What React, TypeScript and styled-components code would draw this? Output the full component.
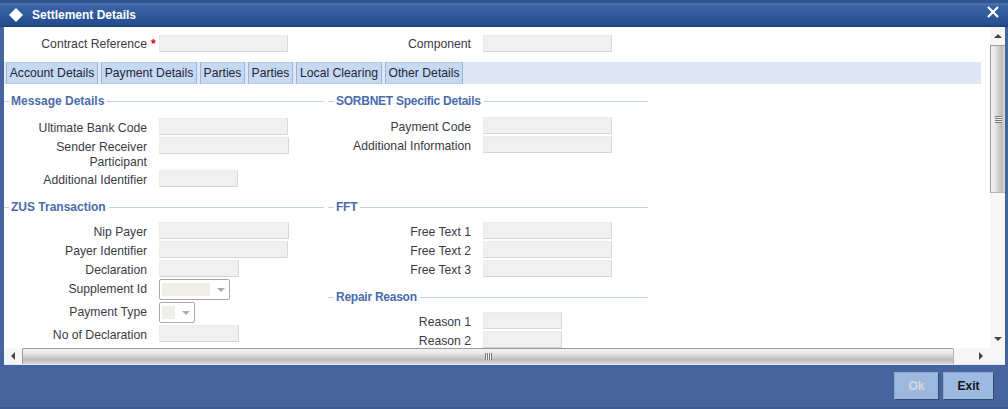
import styled, { createGlobalStyle } from "styled-components";

const GlobalStyle = createGlobalStyle`
  html, body {
    margin: 0;
    padding: 0;
    background: #46659e;
  }
  body {
    font-family: "Liberation Sans", Arial, sans-serif;
    font-size: 12px;
  }
`;

const Frame = styled.div`
  width: 1008px;
  height: 409px;
  display: flex;
  flex-direction: column;
  overflow: hidden;
  background: #46659e;
`;

const TitleBar = styled.header`
  height: 27px;
  box-sizing: border-box;
  flex: none;
  display: flex;
  align-items: center;
  padding: 3px 9px 0 8px;
  gap: 8px;
  color: #fff;
  background: linear-gradient(#2f568f 0, #2f568f 3px, #5d82b8 4px, #3a64a6 5px, #2f5a9c 15px, #234c8d 25px, #173a73 27px);
`;

const Title = styled.h1`
  margin: 0;
  flex: 1;
  font-size: 12px;
  font-weight: bold;
`;

const CloseSlot = styled.span`
  display: flex;
  margin-bottom: 7px;
`;

const Workspace = styled.main`
  flex: none;
  height: 338px;
  margin: 0 3px 0 4px;
  display: flex;
  flex-direction: column;
  background: #fff;
`;

const BodyRow = styled.div`
  flex: 1;
  min-height: 0;
  display: flex;
`;

const Content = styled.div`
  flex: 1;
  min-width: 0;
  overflow: hidden;
  padding-top: 8px;
`;

const TopRow = styled.div`
  display: grid;
  grid-template-columns: 320px 320px;
  column-gap: 4px;
`;

const Field = styled.div<{ $h?: number }>`
  display: grid;
  grid-template-columns: 143px auto;
  column-gap: 12px;
  align-items: start;
  height: ${(p) => p.$h ?? 17}px;
`;

const Label = styled.label<{ $top?: number }>`
  position: relative;
  text-align: right;
  color: #3a3a46;
  font-size: 12.2px;
  line-height: 15px;
  padding-top: ${(p) => p.$top ?? 3}px;
`;

const Required = styled.span`
  position: absolute;
  left: 100%;
  margin-left: 4px;
  color: #e00000;
  font-size: 12px;
  font-weight: bold;
`;

const Input = styled.div<{ $w: number }>`
  width: ${(p) => p.$w}px;
  height: 17px;
  box-sizing: border-box;
  background: #f0f0f0;
  border: 1px solid #ececec;
  border-right-color: #d8d8d8;
  border-bottom-color: #d4d4d4;
`;

const SelectBox = styled.div<{ $w: number; $inner: number }>`
  width: ${(p) => p.$w}px;
  height: 21px;
  box-sizing: border-box;
  border: 1px solid #a8a8a8;
  border-radius: 2px;
  padding: 3px 2px;
  display: flex;
  align-items: center;
  justify-content: space-between;
  background: #fff;

  &::before {
    content: "";
    width: ${(p) => p.$inner}px;
    height: 13px;
    background: #efeee9;
  }
`;

const Caret = styled.span`
  width: 0;
  height: 0;
  margin-right: 2px;
  border-left: 4px solid transparent;
  border-right: 4px solid transparent;
  border-top: 4px solid #a9a9a9;
`;

const TabBar = styled.nav`
  height: 22px;
  margin: 10px 9px 10px 0;
  padding-left: 2px;
  display: flex;
  gap: 3px;
  background: #dfe6f4;
`;

const Tab = styled.div<{ $w: number }>`
  width: ${(p) => p.$w}px;
  box-sizing: border-box;
  display: flex;
  align-items: center;
  justify-content: center;
  color: #1f2533;
  font-size: 12.2px;
  white-space: nowrap;
  background: #c6d9f3;
  border: 1px solid #9db5da;
  border-top-color: #b5c9e6;
  border-bottom-color: #b5c9e6;
`;

const Columns = styled.div`
  display: grid;
  grid-template-columns: 320px 320px;
  column-gap: 4px;
  align-items: start;
`;

const Section = styled.section<{ $top?: number }>`
  margin-top: ${(p) => p.$top ?? 0}px;
`;

const Legend = styled.div<{ $lead: number; $after: number; $tight?: boolean }>`
  display: flex;
  align-items: center;
  height: 14px;
  gap: 2px;
  margin-bottom: ${(p) => p.$after}px;
  color: #4a6cab;
  font-size: 12px;
  font-weight: bold;
  letter-spacing: ${(p) => (p.$tight ? "-0.25px" : "0")};
  white-space: nowrap;

  &::before,
  &::after {
    content: "";
    height: 1px;
    background: #c5d2ea;
  }
  &::before {
    flex: none;
    width: ${(p) => p.$lead}px;
  }
  &::after {
    flex: 1;
    margin-left: 1px;
  }
`;

const FieldStack = styled.div`
  display: flex;
  flex-direction: column;
  gap: 2px;
`;

const HScroll = styled.div`
  flex: none;
  height: 16px;
  display: flex;
  background: #f6f6f6;
  border-bottom: 1px solid #e4e8f0;
`;

const ArrowCell = styled.div<{ $w: number; $h: number }>`
  flex: none;
  width: ${(p) => p.$w}px;
  height: ${(p) => p.$h}px;
  display: flex;
  align-items: center;
  justify-content: center;
`;

const Arrow = styled.span<{ $dir: "up" | "down" | "left" | "right" }>`
  width: 0;
  height: 0;
  border: 3px solid transparent;
  ${(p) =>
    p.$dir === "up"
      ? "border-bottom: 4px solid #444; border-top-width: 0; border-left-width: 4px; border-right-width: 4px;"
      : p.$dir === "down"
        ? "border-top: 4px solid #444; border-bottom-width: 0; border-left-width: 4px; border-right-width: 4px;"
        : p.$dir === "left"
          ? "border-right: 4px solid #444; border-left-width: 0; border-top-width: 4px; border-bottom-width: 4px;"
          : "border-left: 4px solid #444; border-right-width: 0; border-top-width: 4px; border-bottom-width: 4px;"}
`;

const HThumb = styled.div`
  flex: none;
  width: 932px;
  box-sizing: border-box;
  display: flex;
  align-items: center;
  justify-content: center;
  border: 1px solid #9a9a9a;
  border-right-color: #b5b5b5;
  border-bottom: none;
  border-radius: 2px 2px 0 0;
  background: linear-gradient(#f2f2f2, #e6e6e6 30%, #bdbdbd 70%, #d8d8d8);
`;

const Track = styled.div`
  flex: 1;
`;

const HGrip = styled.span`
  width: 7px;
  height: 7px;
  background: repeating-linear-gradient(90deg, #777 0 1px, #eee 1px 2px);
`;

const VScroll = styled.aside`
  flex: none;
  width: 15px;
  display: flex;
  flex-direction: column;
  background: #f6f6f6;
`;

const VThumb = styled.div`
  flex: none;
  height: 148px;
  box-sizing: border-box;
  display: flex;
  align-items: center;
  justify-content: center;
  border: 1px solid #9a9a9a;
  border-right: none;
  border-bottom-color: #b5b5b5;
  background: linear-gradient(90deg, #f2f2f2, #e6e6e6 30%, #bdbdbd 75%, #d8d8d8);
`;

const VGrip = styled.span`
  width: 7px;
  height: 7px;
  background: repeating-linear-gradient(0deg, #777 0 1px, #eee 1px 2px);
`;

const Corner = styled.div`
  flex: none;
  width: 15px;
`;

const Footer = styled.footer`
  flex: 1;
  display: flex;
  justify-content: flex-end;
  align-items: flex-start;
  gap: 4px;
  padding: 7px 14px 0 0;
  background: #46659e;
  border-bottom: 2px solid #3d5a92;
`;

const Button = styled.button<{ $w: number }>`
  width: ${(p) => p.$w}px;
  height: 28px;
  padding: 0;
  font-family: inherit;
  font-size: 12px;
  font-weight: bold;
  color: #141414;
  background: #9dbae2;
  border: 1px solid #8aa6cf;
  border-right-color: #34496f;
  border-bottom-color: #34496f;

  &:disabled {
    color: #d6dae0;
    background: #9db8dd;
  }
`;

const DiamondIcon = () => (
  <svg width="16" height="16" viewBox="0 0 16 16" aria-hidden="true">
    <path d="M8 1 L15 8 L8 15 L1 8 Z" fill="#fff" />
  </svg>
);

const CloseIcon = () => (
  <svg width="12" height="12" viewBox="0 0 12 12" aria-hidden="true">
    <path d="M1 1 L11 11 M11 1 L1 11" stroke="#fff" strokeWidth="2.2" />
  </svg>
);

const tabs = [
  { label: "Account Details", w: 92 },
  { label: "Payment Details", w: 96 },
  { label: "Parties", w: 45 },
  { label: "Parties", w: 45 },
  { label: "Local Clearing", w: 86 },
  { label: "Other Details", w: 78 },
];

const App = () => {
  return (
    <Frame>
      <GlobalStyle />
      <TitleBar>
        <DiamondIcon />
        <Title>Settlement Details</Title>
        <CloseSlot>
          <CloseIcon />
        </CloseSlot>
      </TitleBar>

      <Workspace>
        <BodyRow>
          <Content>
            <TopRow>
              <Field>
                <Label $top={2}>
                  Contract Reference
                  <Required>*</Required>
                </Label>
                <Input $w={129} />
              </Field>
              <Field>
                <Label $top={2}>Component</Label>
                <Input $w={129} />
              </Field>
            </TopRow>

            <TabBar>
              {tabs.map((tab, i) => (
                <Tab key={i} $w={tab.w}>
                  {tab.label}
                </Tab>
              ))}
            </TabBar>

            <Columns>
              <Section>
                <Legend $lead={5} $after={10}>
                  Message Details
                </Legend>
                <FieldStack>
                  <Field>
                    <Label>Ultimate Bank Code</Label>
                    <Input $w={129} />
                  </Field>
                  <Field $h={31}>
                    <Label>
                      Sender Receiver
                      <br />
                      Participant
                    </Label>
                    <Input $w={130} />
                  </Field>
                  <Field>
                    <Label>Additional Identifier</Label>
                    <Input $w={79} />
                  </Field>
                </FieldStack>
              </Section>
              <Section>
                <Legend $lead={6} $after={9} $tight>
                  SORBNET Specific Details
                </Legend>
                <FieldStack>
                  <Field>
                    <Label>Payment Code</Label>
                    <Input $w={129} />
                  </Field>
                  <Field>
                    <Label>Additional Information</Label>
                    <Input $w={129} />
                  </Field>
                </FieldStack>
              </Section>

              <Section $top={13}>
                <Legend $lead={5} $after={8}>
                  ZUS Transaction
                </Legend>
                <FieldStack>
                  <Field>
                    <Label>Nip Payer</Label>
                    <Input $w={130} />
                  </Field>
                  <Field>
                    <Label>Payer Identifier</Label>
                    <Input $w={129} />
                  </Field>
                  <Field>
                    <Label>Declaration</Label>
                    <Input $w={80} />
                  </Field>
                  <Field $h={21}>
                    <Label>Supplement Id</Label>
                    <SelectBox $w={71} $inner={48}>
                      <Caret />
                    </SelectBox>
                  </Field>
                  <Field $h={21}>
                    <Label>Payment Type</Label>
                    <SelectBox $w={36} $inner={13}>
                      <Caret />
                    </SelectBox>
                  </Field>
                  <Field>
                    <Label>No of Declaration</Label>
                    <Input $w={80} />
                  </Field>
                </FieldStack>
              </Section>
              <div>
                <Section $top={13}>
                  <Legend $lead={6} $after={8} $tight>
                    FFT
                  </Legend>
                  <FieldStack>
                    <Field>
                      <Label>Free Text 1</Label>
                      <Input $w={129} />
                    </Field>
                    <Field>
                      <Label>Free Text 2</Label>
                      <Input $w={129} />
                    </Field>
                    <Field>
                      <Label>Free Text 3</Label>
                      <Input $w={129} />
                    </Field>
                  </FieldStack>
                </Section>
                <Section $top={13}>
                  <Legend $lead={6} $after={8} $tight>
                    Repair Reason
                  </Legend>
                  <FieldStack>
                    <Field>
                      <Label>Reason 1</Label>
                      <Input $w={79} />
                    </Field>
                    <Field>
                      <Label>Reason 2</Label>
                      <Input $w={79} />
                    </Field>
                  </FieldStack>
                </Section>
              </div>
            </Columns>
          </Content>

          <VScroll>
            <ArrowCell $w={15} $h={18}>
              <Arrow $dir="up" />
            </ArrowCell>
            <VThumb>
              <VGrip />
            </VThumb>
            <Track />
            <ArrowCell $w={15} $h={18}>
              <Arrow $dir="down" />
            </ArrowCell>
          </VScroll>
        </BodyRow>

        <HScroll>
          <ArrowCell $w={18} $h={15}>
            <Arrow $dir="left" />
          </ArrowCell>
          <HThumb>
            <HGrip />
          </HThumb>
          <Track />
          <ArrowCell $w={18} $h={15}>
            <Arrow $dir="right" />
          </ArrowCell>
          <Corner />
        </HScroll>
      </Workspace>

      <Footer>
        <Button $w={45} disabled>
          Ok
        </Button>
        <Button $w={51}>Exit</Button>
      </Footer>
    </Frame>
  );
};

export default App;
